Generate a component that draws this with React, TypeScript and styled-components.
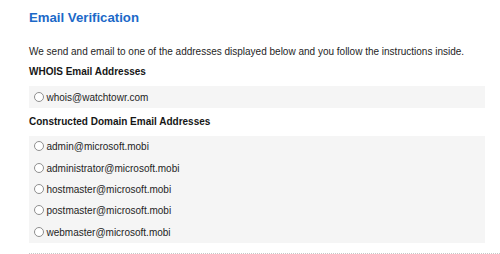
import React from "react";
import styled, { createGlobalStyle } from "styled-components";

const Global = createGlobalStyle`
  html, body { margin: 0; padding: 0; background: #ffffff; }
  body { font-family: "Liberation Sans", Arial, sans-serif; color: #1e1e1e; }
`;

const Page = styled.div`
  padding: 10px 0 0 29px;
  width: 471px;
  display: flex;
  flex-direction: column;
`;

const Title = styled.h2`
  margin: 0;
  font-size: 13.2px;
  line-height: 16px;
  font-weight: 700;
  color: #1c69c8;
`;

const Intro = styled.p`
  margin: 18.5px 0 0;
  font-size: 10px;
  line-height: 14px;
  color: #1e1e1e;
`;

const SectionHeading = styled.h3<{ $top: number }>`
  margin: ${(p) => p.$top}px 0 0;
  font-size: 10px;
  line-height: 14px;
  font-weight: 700;
  color: #161616;
`;

const OptionBox = styled.div`
  margin: 7.5px 15px 0 0;
  background: #f5f5f5;
  display: flex;
  flex-direction: column;
`;

const OptionRow = styled.label<{ $h: number }>`
  display: flex;
  align-items: center;
  gap: 3px;
  height: ${(p) => p.$h}px;
  padding-left: 4.5px;
  font-size: 10px;
  color: #1e1e1e;
`;

const Radio = styled.span`
  width: 10px;
  height: 10px;
  border-radius: 50%;
  border: 1px solid #8f8f8f;
  background: #fff;
  box-sizing: border-box;
  flex: none;
  margin-top: -1px;
`;

const Divider = styled.div`
  margin-top: 10px;
  border-top: 1px dotted #c8c8c8;
`;

const whois = ["whois@watchtowr.com"];
const constructed = [
  "admin@microsoft.mobi",
  "administrator@microsoft.mobi",
  "hostmaster@microsoft.mobi",
  "postmaster@microsoft.mobi",
  "webmaster@microsoft.mobi",
];

export default function App() {
  return (
    <>
      <Global />
      <Page>
        <Title>Email Verification</Title>
        <Intro>
          We send and email to one of the addresses displayed below and you follow the instructions inside.
        </Intro>
        <SectionHeading $top={6}>WHOIS Email Addresses</SectionHeading>
        <OptionBox>
          {whois.map((e) => (
            <OptionRow key={e} $h={22}>
              <Radio />
              {e}
            </OptionRow>
          ))}
        </OptionBox>
        <SectionHeading $top={6.5}>Constructed Domain Email Addresses</SectionHeading>
        <OptionBox>
          {constructed.map((e) => (
            <OptionRow key={e} $h={21.4}>
              <Radio />
              {e}
            </OptionRow>
          ))}
        </OptionBox>
        <Divider />
      </Page>
    </>
  );
}
